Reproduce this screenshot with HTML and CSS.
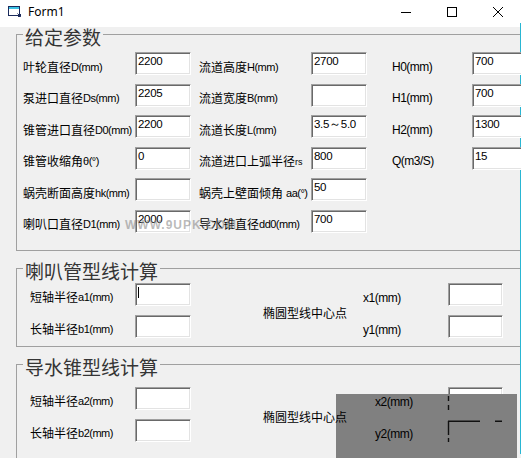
FILE: index.html
```html
<!DOCTYPE html>
<html>
<head>
<meta charset="utf-8">
<title>Form1</title>
<link rel="stylesheet" href="styles.css">
</head>
<body>
<div class="win">
  <div class="titlebar">
    <svg class="appicon" width="14" height="12" viewBox="0 0 14 12">
      <rect x="0.5" y="0.5" width="11" height="9" fill="#fff" stroke="#1b2b5c"/>
      <rect x="1" y="1" width="10" height="2" fill="#3cc3e6"/>
      <path d="M9.5 7.5 L12.5 10.5 M12.5 8 V10.5 H10" fill="none" stroke="#1b2b5c"/>
    </svg>
    <span class="title">Form1</span>
    <div class="ctrls">
      <span class="ctl"><svg width="10" height="10" viewBox="0 0 10 10"><path d="M0 5.5H10" stroke="#000"/></svg></span>
      <span class="ctl"><svg width="10" height="10" viewBox="0 0 10 10"><rect x="0.5" y="0.5" width="9" height="9" fill="none" stroke="#000"/></svg></span>
      <span class="ctl"><svg width="10" height="10" viewBox="0 0 10 10"><path d="M0 0L10 10M10 0L0 10" stroke="#000"/></svg></span>
    </div>
  </div>

  <div class="client">
    <fieldset class="grp g1">
      <legend>给定参数</legend>
      <div class="grid1">
        <div class="lbl">叶轮直径<span class="en">D(mm)</span></div>
        <div class="tb">2200</div>
        <div class="lbl c3">流道高度<span class="en">H(mm)</span></div>
        <div class="tb">2700</div>
        <div class="lbl c5 en">H0(mm)</div>
        <div class="tb">700</div>

        <div class="lbl">泵进口直径<span class="en">Ds(mm)</span></div>
        <div class="tb">2205</div>
        <div class="lbl c3">流道宽度<span class="en">B(mm)</span></div>
        <div class="tb"></div>
        <div class="lbl c5 en">H1(mm)</div>
        <div class="tb">700</div>

        <div class="lbl">锥管进口直径<span class="en">D0(mm)</span></div>
        <div class="tb">2200</div>
        <div class="lbl c3">流道长度<span class="en">L(mm)</span></div>
        <div class="tb">3.5～5.0</div>
        <div class="lbl c5 en">H2(mm)</div>
        <div class="tb">1300</div>

        <div class="lbl">锥管收缩角<span class="en">θ(°)</span></div>
        <div class="tb">0</div>
        <div class="lbl c3">流道进口上弧半径<span class="en sm">rs</span></div>
        <div class="tb">800</div>
        <div class="lbl c5 en">Q(m3/S)</div>
        <div class="tb">15</div>

        <div class="lbl">蜗壳断面高度<span class="en">hk(mm)</span></div>
        <div class="tb"></div>
        <div class="lbl c3">蜗壳上壁面倾角<span class="en sp">aa(°)</span></div>
        <div class="tb">50</div>
        <div></div>
        <div></div>

        <div class="lbl">喇叭口直径<span class="en">D1(mm)</span></div>
        <div class="tb">2000</div>
        <div class="lbl c3">导水锥直径<span class="en">dd0(mm)</span></div>
        <div class="tb">700</div>
      </div>
    </fieldset>

    <fieldset class="grp g2">
      <legend>喇叭管型线计算</legend>
      <div class="grid2">
        <div class="lbl">短轴半径<span class="en">a1(mm)</span></div>
        <div class="tb"><span class="caret"></span></div>
        <div class="mid">椭圆型线中心点</div>
        <div class="lbl xy en">x1(mm)</div>
        <div class="tb"></div>
        <div class="lbl">长轴半径<span class="en">b1(mm)</span></div>
        <div class="tb"></div>
        <div class="lbl xy en">y1(mm)</div>
        <div class="tb"></div>
      </div>
    </fieldset>

    <fieldset class="grp g3">
      <legend>导水锥型线计算</legend>
      <div class="grid3">
        <div class="lbl">短轴半径<span class="en">a2(mm)</span></div>
        <div class="tb"></div>
        <div class="mid top">椭圆型线中心点</div>
        <div class="lbl xy en top">x2(mm)</div>
        <div class="tb"></div>
        <div class="lbl">长轴半径<span class="en">b2(mm)</span></div>
        <div class="tb"></div>
        <div class="lbl xy en top">y2(mm)</div>
        <div class="tb"></div>
      </div>
    </fieldset>
  </div>

  <div class="wm">WWW.9UPK.COM</div>

  <div class="ovl">
    <svg width="181" height="64" viewBox="0 0 181 64">
      <path d="M112.5 2V7M112.5 11V16M112 27.2H144M112.5 27V41M112.5 44V48M159 27.2H166" stroke="#111" stroke-width="1.4" fill="none"/>
    </svg>
  </div>
</div>
</body>
</html>
```

FILE: styles.css
```css
* { box-sizing: border-box; }
html, body { margin: 0; padding: 0; }
body {
  width: 521px;
  height: 458px;
  overflow: hidden;
  background: #f0f0f0;
  font-family: "Noto Sans CJK SC", sans-serif;
  color: #000;
}
.win {
  position: relative;
  width: 521px;
  height: 458px;
  overflow: hidden;
}
.titlebar {
  height: 27px;
  background: #fff;
  display: flex;
  align-items: flex-start;
}
.appicon { margin: 6px 0 0 8px; flex: none; }
.title {
  font-family: "Noto Sans", "Liberation Sans", sans-serif;
  font-size: 12px;
  line-height: 14px;
  margin: 5px 0 0 6px;
}
.ctrls { margin-left: auto; display: flex; }
.ctl {
  width: 46px;
  height: 27px;
  display: flex;
  justify-content: center;
  padding-top: 7px;
}
.ctl svg { display: block; }

.client {
  height: 431px;
  border-right: 1px solid #29b6d3;
  padding-left: 16px;
}
.grp {
  width: 504px;
  min-width: 0;
  margin: 6px 0 0;
  border: 1px solid #a0a0a0;
  border-right: none;
  padding: 0 0 0 6px;
}
.grp legend {
  font-family: "Noto Sans CJK SC", sans-serif;
  font-size: 19px;
  line-height: 19px;
  padding: 4px 2px 0;
  color: #353535;
}
.g1 { margin-top: -4px; padding-top: 6px; padding-bottom: 17px; }
.g2 { padding-top: 3px; padding-bottom: 8px; }
.g3 { padding-top: 11px; padding-bottom: 20px; }

.en {
  font-family: "Liberation Sans", sans-serif;
  font-size: 11px;
  letter-spacing: -0.5px;
}
.sp { margin-left: 3px; }
.sm { font-size: 9px; letter-spacing: 0; padding-top: 2px; }

.lbl {
  font-size: 12px;
  line-height: 14px;
  padding-top: 6px;
  white-space: nowrap;
  display: flex;
  align-items: center;
}
.c3 { padding-left: 8px; }
.c5 { padding-left: 25px; }

.tb {
  position: relative;
  height: 23px;
  background: #fff;
  border: 1px solid;
  border-color: #a0a0a0 #fff #fff #a0a0a0;
  box-shadow: inset 1px 1px 0 #696969, inset -1px -1px 0 #e3e3e3;
  font-family: "Liberation Sans", sans-serif;
  font-size: 11.5px;
  letter-spacing: -0.3px;
  line-height: 14px;
  padding: 1px 2px;
  white-space: nowrap;
  overflow: hidden;
}
.caret {
  display: block;
  width: 1px;
  height: 11px;
  margin-top: 2px;
  background: #000;
}

.grid1 {
  display: grid;
  grid-template-columns: 112px 56px 120px 56px 105px 56px;
  grid-auto-rows: 23px;
  row-gap: 8.6px;
}
.grid2, .grid3 {
  display: grid;
  margin-left: 7px;
  grid-auto-rows: 23px;
  row-gap: 9px;
}
.grid2 { grid-template-columns: 105px 56px 72px 100px 85px 55px; }
.grid3 { grid-template-columns: 105px 56px 72px 112px 73px 55px; }
.grid2 > .lbl:not(.xy), .grid3 > .lbl:not(.xy) { grid-column: 1; }
.grid2 > .xy, .grid3 > .xy { grid-column: 5; padding-top: 8px; }
.mid {
  grid-column: 4;
  grid-row: 1 / 3;
  align-self: center;
  font-size: 12px;
  line-height: 14px;
  padding-top: 5px;
  white-space: nowrap;
}
.top { position: relative; z-index: 2; }

.wm {
  position: absolute;
  left: 125px;
  top: 218px;
  font-family: "Liberation Sans", sans-serif;
  font-weight: bold;
  font-size: 12px;
  line-height: 14px;
  letter-spacing: 1px;
  color: rgba(140, 140, 140, 0.6);
  z-index: 3;
}
.ovl {
  position: absolute;
  left: 336px;
  top: 394px;
  width: 181px;
  height: 64px;
  background: #808080;
  z-index: 1;
}
.ovl svg { display: block; }
```
